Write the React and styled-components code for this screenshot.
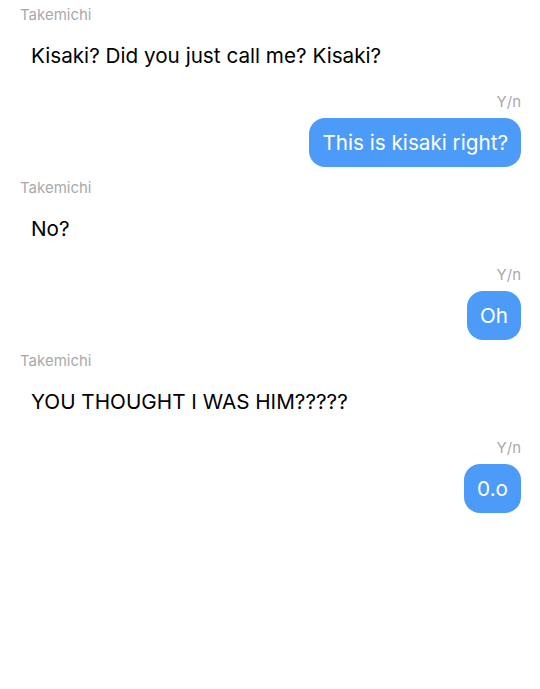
import React from 'react'
import styled, { createGlobalStyle } from "styled-components";

const GlobalStyle = createGlobalStyle`
  body {
    margin: 0;
    background: #fff;
    font-family: Inter, "Liberation Sans", Arial, sans-serif;
  }
`;

const Thread = styled.div`
  display: flex;
  flex-direction: column;
  padding: 6px 19px 0 20px;
`;

const Group = styled.div`
  display: flex;
  flex-direction: column;
  align-items: ${(p) => (p.$mine ? "flex-end" : "flex-start")};
  margin-bottom: 12.5px;
`;

const Sender = styled.div`
  font-size: 15px;
  line-height: 18px;
  color: #a9a9ab;
  margin-bottom: 7px;
`;

const Bubble = styled.div`
  font-size: 20.7px;
  line-height: 25px;
  padding: 12px ${(p) => (p.$mine ? "13px" : "11px")};
  border-radius: 16px;
  background: ${(p) => (p.$mine ? "#4d9bf8" : "transparent")};
  color: ${(p) => (p.$mine ? "#fff" : "#000")};
`;

const messages = [
  { from: "Takemichi", text: "Kisaki? Did you just call me? Kisaki?" },
  { from: "Y/n", text: "This is kisaki right?", mine: true },
  { from: "Takemichi", text: "No?" },
  { from: "Y/n", text: "Oh", mine: true },
  { from: "Takemichi", text: "YOU THOUGHT I WAS HIM?????" },
  { from: "Y/n", text: "0.o", mine: true },
];

function App() {
  return (
    <>
      <GlobalStyle />
      <Thread>
        {messages.map((m, i) => (
          <Group key={i} $mine={m.mine}>
            <Sender>{m.from}</Sender>
            <Bubble $mine={m.mine}>{m.text}</Bubble>
          </Group>
        ))}
      </Thread>
    </>
  )
}

export default App
